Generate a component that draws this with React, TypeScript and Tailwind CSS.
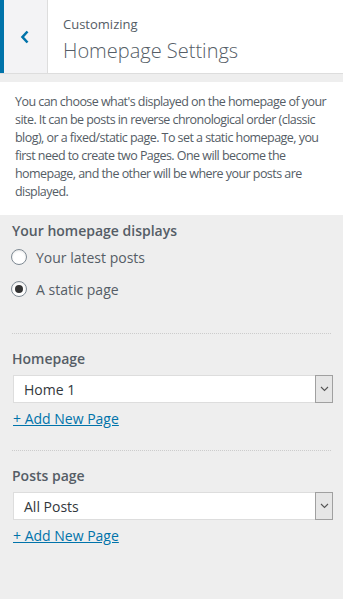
import React from "react";

function Radio({ checked, label }: { checked?: boolean; label: string }) {
  return (
    <label className="flex items-center h-[32px]">
      <span className="w-[16px] h-[16px] rounded-full border border-[#7e8993] bg-white flex items-center justify-center shadow-[inset_0_1px_2px_rgba(0,0,0,0.1)] ml-[11px]">
        {checked && <span className="w-[8px] h-[8px] rounded-full bg-[#333]" />}
      </span>
      <span className="ml-[9px] text-[14px] text-[#555d66]">{label}</span>
    </label>
  );
}

function Select({ value }: { value: string }) {
  return (
    <div className="ml-[13px] mr-[10px] h-[28px] bg-white border border-[#ddd] flex items-stretch">
      <div className="flex-1 flex items-center pl-[10px] text-[14px] text-[#32373c]">{value}</div>
      <div className="w-[18px] bg-[#e6e6e6] border border-[#a0a0a0] flex items-center justify-center -my-[1px] -mr-[1px]">
        <svg width="9" height="6" viewBox="0 0 9 6">
          <path d="M1 1 L4.5 4.5 L8 1" fill="none" stroke="#555" strokeWidth="1.1" />
        </svg>
      </div>
    </div>
  );
}

export default function App() {
  return (
    <div className="w-[343px] h-[599px] bg-[#eee] overflow-hidden" style={{ fontFamily: '"Open Sans", "Noto Sans", sans-serif' }}>
      <div className="h-[74px] bg-white flex border-b border-[#ddd]">
        <div className="w-[48px] bg-[#f3f3f5] border-l-[4px] border-[#0073aa] border-r border-r-[#ddd] flex items-center justify-center">
          <svg width="10" height="14" viewBox="0 0 10 14" className="mr-[2px]">
            <path d="M7.5 1.5 L2.5 7 L7.5 12.5" fill="none" stroke="#0073aa" strokeWidth="2.6" />
          </svg>
        </div>
        <div className="pl-[15px] pt-[15px]">
          <div className="text-[13px] text-[#555d66] leading-[18px]">Customizing</div>
          <div className="text-[20px] font-light text-[#555d66] leading-[26px] mt-[5px]">Homepage Settings</div>
        </div>
      </div>
      <div className="h-[8px]" />
      <div className="bg-white px-[15px] pt-[11px] pb-[14px] text-[12.5px] leading-[18px] text-[#555d66] tracking-[-0.55px] whitespace-nowrap">
        You can choose what's displayed on the homepage of your<br />
        site. It can be posts in reverse chronological order (classic<br />
        blog), or a fixed/static page. To set a static homepage, you<br />
        first need to create two Pages. One will become the<br />
        homepage, and the other will be where your posts are<br />
        displayed.
      </div>
      <div className="pt-[6px]">
        <div className="px-[12px] text-[14px] font-semibold text-[#555d66] leading-[20px]">Your homepage displays</div>
        <div>
          <Radio label="Your latest posts" />
          <Radio checked label="A static page" />
        </div>
        <div className="mx-[12px] mt-[28px] border-t border-dotted border-[#ccc]" />
        <div className="px-[12px] mt-[15px] text-[14px] font-semibold text-[#555d66] leading-[20px]">Homepage</div>
        <div className="mt-[6px]"><Select value="Home 1" /></div>
        <div className="px-[13px] mt-[6px] text-[14px] text-[#0073aa] underline leading-[20px]">+ Add New Page</div>
        <div className="mx-[12px] mt-[21px] border-t border-dotted border-[#ccc]" />
        <div className="px-[12px] mt-[15px] text-[14px] font-semibold text-[#555d66] leading-[20px]">Posts page</div>
        <div className="mt-[6px]"><Select value="All Posts" /></div>
        <div className="px-[13px] mt-[6px] text-[14px] text-[#0073aa] underline leading-[20px]">+ Add New Page</div>
      </div>
    </div>
  );
}
